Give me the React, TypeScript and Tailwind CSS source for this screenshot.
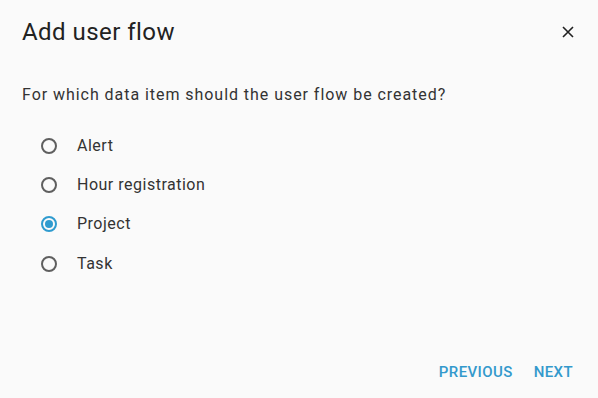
import { useState } from 'react'

const options = ['Alert', 'Hour registration', 'Project', 'Task']

function Radio({ checked }: { checked: boolean }) {
  return (
    <span
      className={`flex h-[16px] w-[16px] items-center justify-center rounded-full border-2 ${
        checked ? 'border-[#2f9bcf]' : 'border-[#5f5f5f]'
      }`}
    >
      {checked && <span className="h-[8px] w-[8px] rounded-full bg-[#2f9bcf]" />}
    </span>
  )
}

export default function App() {
  const [selected, setSelected] = useState('Project')

  return (
    <div className="flex h-[398px] w-[598px] flex-col bg-[#fafafa] font-['Roboto',sans-serif] text-[#212121]">
      <div className="flex items-center justify-between pl-[22px] pr-[18px] pt-[17px]">
        <h2 className="text-[24px] leading-[30px] font-normal tracking-[0.45px] text-[#222]">Add user flow</h2>
        <button className="flex h-6 w-6 items-center justify-center text-[#212121]">
          <svg width="12" height="12" viewBox="0 0 12 12" fill="none">
            <path d="M1 1L11 11M11 1L1 11" stroke="currentColor" strokeWidth="1.6" />
          </svg>
        </button>
      </div>

      <p className="mt-[36px] pl-[22px] text-[16px] leading-[24px] tracking-[0.95px] text-[#333]">
        For which data item should the user flow be created?
      </p>

      <div className="mt-[19px] flex flex-col pl-[41px]">
        {options.map((o) => (
          <label
            key={o}
            onClick={() => setSelected(o)}
            className="flex h-[39.4px] cursor-pointer items-center gap-[20px]"
          >
            <Radio checked={selected === o} />
            <span className="text-[16px] tracking-[0.5px] text-[#333]">{o}</span>
          </label>
        ))}
      </div>

      <div className="mt-auto flex justify-end gap-[21px] pb-[15px] pr-[25px]">
        <button className="text-[15px] font-medium uppercase tracking-[0.4px] text-[#3399cc]">Previous</button>
        <button className="text-[15px] font-medium uppercase tracking-[0.4px] text-[#3399cc]">Next</button>
      </div>
    </div>
  )
}
